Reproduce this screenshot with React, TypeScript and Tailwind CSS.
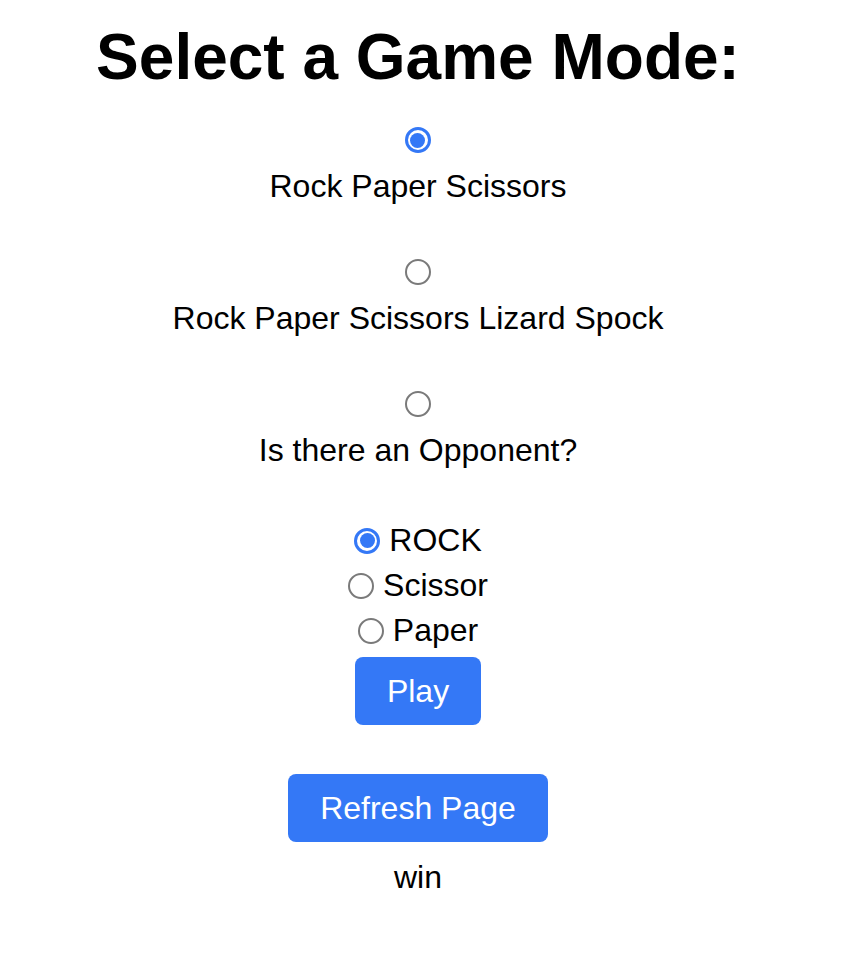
import { useState } from 'react';

const MODES = ['Rock Paper Scissors', 'Rock Paper Scissors Lizard Spock', 'Is there an Opponent?'];
const CHOICES = ['ROCK', 'Scissor', 'Paper'];

function Radio({ checked, onClick }: { checked: boolean; onClick: () => void }) {
  return (
    <button
      type="button"
      onClick={onClick}
      className={`w-[26px] h-[26px] rounded-full flex items-center justify-center shrink-0 bg-white ${
        checked ? 'border-[3px] border-[#3478f6]' : 'border-2 border-[#7a7a7a]'
      }`}
    >
      {checked && <span className="w-[15px] h-[15px] rounded-full bg-[#3478f6]" />}
    </button>
  );
}

export default function App() {
  const [mode, setMode] = useState(0);
  const [choice, setChoice] = useState(0);

  return (
    <div className="min-h-screen bg-white text-black font-['Liberation_Sans',Arial,sans-serif]">
      <div className="w-[836px] flex flex-col items-center text-center">
        <h1 className="mt-5 text-[64px] leading-[74px] font-bold">Select a Game Mode:</h1>

        <div className="mt-[33px] flex flex-col items-center">
          {MODES.map((m, i) => (
            <div key={m} className={`flex flex-col items-center ${i > 0 ? 'mt-[54px]' : ''}`}>
              <Radio checked={mode === i} onClick={() => setMode(i)} />
              <label className="mt-[15px] text-[32px] leading-[37px]">{m}</label>
            </div>
          ))}
        </div>

        <div className="mt-[49px] flex flex-col items-center">
          {CHOICES.map((c, i) => (
            <div key={c} className="h-[45px] flex items-center gap-[9px]">
              <Radio checked={choice === i} onClick={() => setChoice(i)} />
              <span className="text-[32px] leading-[37px]">{c}</span>
            </div>
          ))}
        </div>

        <button className="mt-[4px] h-[68px] px-8 rounded-lg bg-[#3478f6] text-white text-[32px] leading-[37px]">
          Play
        </button>

        <button className="mt-[49px] h-[68px] px-8 rounded-lg bg-[#3478f6] text-white text-[32px] leading-[37px]">
          Refresh Page
        </button>

        <p className="mt-[17px] text-[32px] leading-[37px]">win</p>
      </div>
    </div>
  );
}
